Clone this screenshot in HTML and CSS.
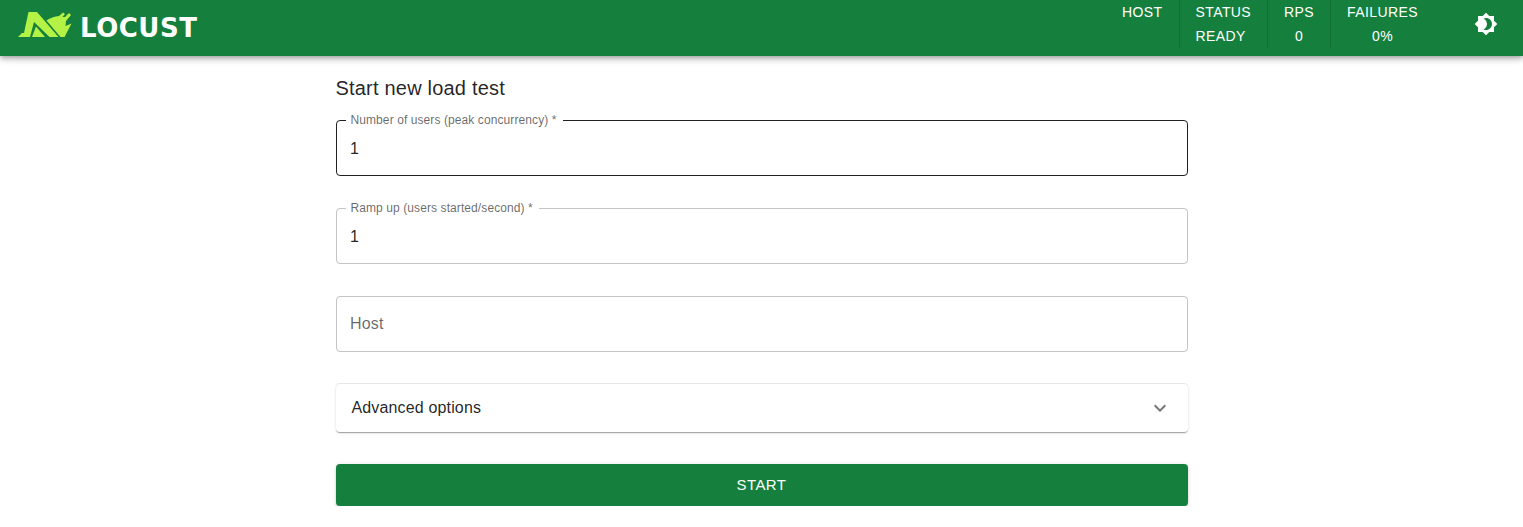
FILE: index.html
```html
<!DOCTYPE html>
<html lang="en">
<head>
    <meta charset="UTF-8">
    <meta name="viewport" content="width=device-width, initial-scale=1.0">
    <title>Locust</title>
    <link rel="stylesheet" href="styles.css">
</head>
<body>
    <header class="navbar">
        <a class="brand" href="#">
            <svg class="brand-mark" viewBox="18 10 54 28" aria-hidden="true">
                <path d="M18 37l4-4h2l4.500-21H37l21.500 25H49.500L34 22 30 37z"/>
                <path d="M32 37l4-10.500 9 10.500z"/>
                <path d="M46.500 20.500Q52 16.500 59 16l4-3.500 2 1.500-2.500 3h2.500l4-4 2 2-5 6-.5 5 6-2.500L64.500 37H60.500z"/>
            </svg>
            <span class="brand-name">LOCUST</span>
        </a>
        <div class="stats">
            <div class="stat">
                <span>HOST</span>
            </div>
            <div class="stat stat-left">
                <span>STATUS</span>
                <span>READY</span>
            </div>
            <div class="stat">
                <span>RPS</span>
                <span>0</span>
            </div>
            <div class="stat">
                <span>FAILURES</span>
                <span>0%</span>
            </div>
        </div>
        <button class="theme-toggle" type="button" aria-label="Toggle theme">
            <svg viewBox="0 0 24 24" aria-hidden="true">
                <path d="M20 8.69V4h-4.690L12 .69 8.690 4H4v4.690L.69 12 4 15.310V20h4.690L12 23.310 15.310 20H20v-4.690L23.310 12 20 8.690zM12 18c-.89 0-1.740-.2-2.500-.55C11.560 16.500 13 14.420 13 12s-1.440-4.500-3.500-5.450C10.260 6.200 11.110 6 12 6c3.310 0 6 2.690 6 6s-2.690 6-6 6z"/>
            </svg>
        </button>
    </header>
    <main class="container">
        <h1>Start new load test</h1>
        <form class="swarm-form">
            <div class="field field-active">
                <label for="users">Number of users (peak concurrency) *</label>
                <input id="users" type="text" value="1">
            </div>
            <div class="field">
                <label for="ramp">Ramp up (users started/second) *</label>
                <input id="ramp" type="text" value="1">
            </div>
            <div class="field">
                <input id="host" type="text" placeholder="Host">
            </div>
            <div class="accordion">
                <span>Advanced options</span>
                <svg viewBox="0 0 24 24" aria-hidden="true">
                    <path d="M16.590 8.590 12 13.170 7.410 8.590 6 10l6 6 6-6z"/>
                </svg>
            </div>
            <button class="start" type="button">START</button>
        </form>
    </main>
</body>
</html>
```

FILE: styles.css
```css
* { box-sizing: border-box; }
body { font-family: "Liberation Sans", Arial, sans-serif; margin: 0; background: #fff; color: rgba(0, 0, 0, 0.87); }

.navbar { display: flex; align-items: flex-start; height: 56px; padding: 0 17px 0 18px; background: #15803d; color: #fff; box-shadow: 0 2px 4px -1px rgba(0, 0, 0, 0.2), 0 4px 5px rgba(0, 0, 0, 0.14), 0 1px 10px rgba(0, 0, 0, 0.12); }
.brand { display: flex; align-items: center; gap: 8px; height: 56px; color: #fff; text-decoration: none; }
.brand-mark { width: 54px; height: 28px; margin-top: -8px; fill: #b4f245; }
.brand-name { font-family: "DejaVu Sans", sans-serif; font-size: 26px; font-weight: 700; letter-spacing: 0.5px; line-height: 30px; margin-top: -1px; }

.stats { display: flex; margin-left: auto; }
.stat { display: flex; flex-direction: column; align-items: center; height: 48px; padding: 0 16px; border-left: 1px solid rgba(0, 0, 0, 0.12); font-size: 14px; letter-spacing: 0.4px; line-height: 24px; }
.stat:first-child { border-left: none; }
.stat-left { align-items: flex-start; }

.theme-toggle { display: flex; align-items: center; justify-content: center; width: 40px; height: 40px; margin: 4px 0 0 32px; padding: 0; border: none; background: none; cursor: pointer; }
.theme-toggle svg { width: 24px; height: 24px; fill: #fff; }

.container { width: 900px; margin: 0 auto; padding: 16px 24px 0; }
h1 { font-size: 20px; font-weight: 400; letter-spacing: 0.2px; line-height: 32px; margin: 0 0 16px; }

.swarm-form { display: flex; flex-direction: column; gap: 32px; }

.field { position: relative; }
.field input { display: block; width: 100%; height: 56px; padding: 0 13.5px; font: inherit; font-size: 16px; letter-spacing: 0.15px; color: inherit; border: 1px solid rgba(0, 0, 0, 0.23); border-radius: 4px; outline: none; background: none; }
.field label + input { padding-top: 2px; }
.field input::placeholder { color: rgba(0, 0, 0, 0.6); opacity: 1; }
.field label { position: absolute; top: -7px; left: 10px; padding: 0 6px 0 5px; font-size: 12px; letter-spacing: 0.09px; line-height: 14px; color: rgba(0, 0, 0, 0.6); background: #fff; }
.field-active input { border-color: rgba(0, 0, 0, 0.87); }

.accordion { display: flex; align-items: center; justify-content: space-between; height: 48px; padding: 0 16px; font-size: 16px; letter-spacing: 0.15px; background: #fff; border-radius: 4px; box-shadow: 0 -1px 0 rgba(0, 0, 0, 0.08), 0 2px 1px -1px rgba(0, 0, 0, 0.2), 0 1px 1px rgba(0, 0, 0, 0.14), 0 1px 3px rgba(0, 0, 0, 0.12); }
.accordion svg { width: 24px; height: 24px; fill: rgba(0, 0, 0, 0.54); }

.start { height: 42px; padding: 0 0 2px; font: inherit; font-size: 15px; font-weight: 500; letter-spacing: 0.4px; color: #fff; background: #15803d; border: none; border-radius: 4px; cursor: pointer; box-shadow: 0 3px 1px -2px rgba(0, 0, 0, 0.2), 0 2px 2px rgba(0, 0, 0, 0.14), 0 1px 5px rgba(0, 0, 0, 0.12); }
```
